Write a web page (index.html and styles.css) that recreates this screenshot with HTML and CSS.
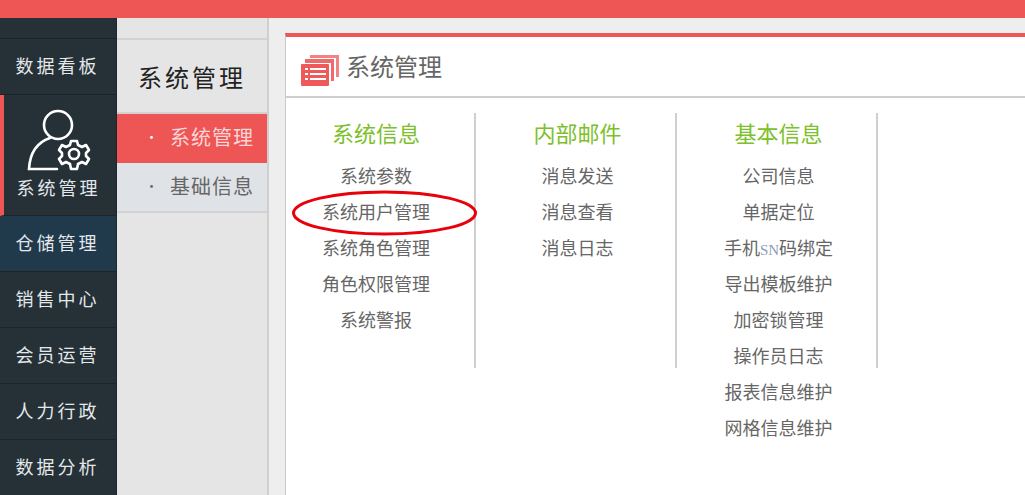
FILE: index.html
```html
<!DOCTYPE html>
<html lang="zh-CN">
<head>
    <meta charset="UTF-8">
    <title>系统管理</title>
    <link rel="stylesheet" href="styles.css">
</head>
<body>

<div class="top-bar"></div>

<div class="main">
    <div class="side-nav">
        <div class="side-blank"></div>
        <div class="side-item">数据看板</div>
        <div class="side-item side-active">
            <svg class="side-icon" width="68" height="62" viewBox="0 0 68 62" fill="none" stroke="#fff" stroke-width="2.6">
                <circle cx="33" cy="16" r="14"/>
                <path d="M25 29C13 33 5 42 4 60H32" stroke-linecap="round"/>
                <circle cx="49" cy="45" r="5"/>
                <path d="M46 32H52L53 36L57 38L61 36L64 41L61 44V47L64 50L61 55L57 53L53 55L52 60H46L45 55L41 53L37 55L34 50L37 47V44L34 41L37 36L41 38L45 36Z" stroke-linejoin="round"/>
            </svg>
            <span>系统管理</span>
        </div>
        <div class="side-item side-hover">仓储管理</div>
        <div class="side-item">销售中心</div>
        <div class="side-item">会员运营</div>
        <div class="side-item">人力行政</div>
        <div class="side-item">数据分析</div>
    </div>

    <div class="sub-nav">
        <div class="sub-title">系统管理</div>
        <div class="sub-item sub-active"><i>·</i>系统管理</div>
        <div class="sub-item"><i>·</i>基础信息</div>
    </div>

    <div class="content">
        <div class="panel">
            <div class="panel-head">
                <svg class="panel-icon" width="40" height="34" viewBox="0 0 40 34">
                    <path d="M10 5V2H39V24H36V5Z" fill="#ee5a5a" opacity="0.75"/>
                    <path d="M5 10V6H34V28H31V10Z" fill="#ee5a5a" opacity="0.9"/>
                    <rect x="1" y="11" width="28" height="22" rx="1" fill="#ee5a5a"/>
                    <path d="M5 16H8M10 16H26M5 21H8M10 21H26M5 26H8M10 26H26" stroke="#fff" stroke-width="2"/>
                </svg>
                <span>系统管理</span>
            </div>
            <div class="menu-cols">
                <div class="menu-col menu-col-first">
                    <h3>系统信息</h3>
                    <a>系统参数</a>
                    <a>系统用户管理</a>
                    <a>系统角色管理</a>
                    <a>角色权限管理</a>
                    <a>系统警报</a>
                </div>
                <div class="menu-col">
                    <h3>内部邮件</h3>
                    <a>消息发送</a>
                    <a>消息查看</a>
                    <a>消息日志</a>
                </div>
                <div class="menu-col">
                    <h3>基本信息</h3>
                    <a>公司信息</a>
                    <a>单据定位</a>
                    <a>手机<span class="sn">SN</span>码绑定</a>
                    <a>导出模板维护</a>
                    <a>加密锁管理</a>
                    <a>操作员日志</a>
                    <a>报表信息维护</a>
                    <a>网格信息维护</a>
                </div>
            </div>
        </div>
    </div>
</div>

<svg class="mark" width="187" height="48" viewBox="0 0 187 48" fill="none">
    <ellipse cx="93.5" cy="24" rx="91" ry="21" stroke="#e8000b" stroke-width="3"/>
</svg>

</body>
</html>
```

FILE: styles.css
```css
html, body {
    margin: 0;
    padding: 0;
    height: 495px;
    overflow: hidden;
}

body {
    font-family: "Noto Sans CJK SC", "Liberation Sans", sans-serif;
    background-color: #eeeeee;
    color: #666;
    position: relative;
}

.top-bar {
    height: 18px;
    background-color: #ee5555;
}

.main {
    display: flex;
    height: 477px;
}

/* left dark menu */
.side-nav {
    width: 117px;
    flex-shrink: 0;
    background-color: #253137;
    color: #e4e8ea;
    box-sizing: border-box;
    border-right: 1px solid #1d272c;
}

.side-blank {
    height: 20px;
    border-bottom: 1px solid #1b2429;
}

.side-item {
    height: 52px;
    border-bottom: 1px solid #1b2429;
    display: flex;
    align-items: center;
    justify-content: center;
    font-size: 18px;
    letter-spacing: 3px;
    padding-right: 1px;
    padding-bottom: 3px;
}

.side-active {
    height: 120px;
    flex-direction: column;
    justify-content: flex-start;
    border-left: 4px solid #ee5555;
    padding-right: 0;
    padding-bottom: 0;
}

.side-active span {
    line-height: 24px;
    margin-top: 4px;
    margin-right: 3px;
}

.side-icon {
    margin-top: 14px;
    margin-right: 2px;
    display: block;
}

.side-hover {
    background-color: #203a4c;
}

/* second menu */
.sub-nav {
    width: 152px;
    flex-shrink: 0;
    box-sizing: border-box;
    background-color: #e5e5e5;
    border-right: 2px solid #cfcfcf;
    padding-top: 20px;
}

.sub-title {
    height: 72px;
    border-top: 2px solid #d2d2d2;
    border-bottom: 2px solid #d2d2d2;
    display: flex;
    align-items: center;
    padding-left: 21px;
    font-size: 24px;
    letter-spacing: 3px;
    color: #222;
}

.sub-item {
    height: 44px;
    padding-bottom: 4px;
    display: flex;
    align-items: center;
    font-size: 20px;
    color: #666;
    background-color: #dfe3e7;
    border-bottom: 2px solid #d2d2d2;
    letter-spacing: 1px;
}

.sub-item i {
    width: 53px;
    padding-left: 28px;
    box-sizing: border-box;
    font-style: normal;
    font-size: 13px;
}

.sub-active {
    height: 45px;
    background-color: #ee5555;
    color: #fbd5d5;
    border-bottom: none;
}

.sub-active i {
    color: #fff;
}

/* content */
.content {
    flex: 1;
    padding: 15px 0 0 16px;
}

.panel {
    height: 462px;
    box-sizing: border-box;
    background-color: #fff;
    border-top: 4px solid #ee5555;
    border-left: 1px solid #c9c9c9;
}

.panel-head {
    height: 61px;
    box-sizing: border-box;
    border-bottom: 2px solid #cfcfcf;
    display: flex;
    align-items: center;
    padding-left: 14px;
    padding-bottom: 2px;
    font-size: 24px;
    color: #666;
}

.panel-icon {
    margin: 8px 6px 0 0;
}

.menu-cols {
    display: flex;
    margin-top: 15px;
}

.menu-col {
    width: 195px;
    flex-shrink: 0;
    height: 255px;
    border-right: 2px solid #cfcfcf;
    display: flex;
    flex-direction: column;
    align-items: center;
    padding-left: 4px;
}

.menu-col-first {
    width: 180px;
    padding-left: 0;
    padding-right: 8px;
}

.menu-col h3 {
    margin: 0 0 6px;
    font-size: 22px;
    font-weight: normal;
    line-height: 38px;
    color: #7ebf2c;
}

.menu-col a {
    display: block;
    height: 36px;
    font-size: 18px;
    line-height: 36px;
    color: #666;
    white-space: nowrap;
}

.sn {
    font-family: "Liberation Serif", serif;
    color: #8c9cc0;
    font-size: 15px;
    line-height: 1;
}

/* red hand drawn circle */
.mark {
    position: absolute;
    left: 291px;
    top: 189px;
}
```
